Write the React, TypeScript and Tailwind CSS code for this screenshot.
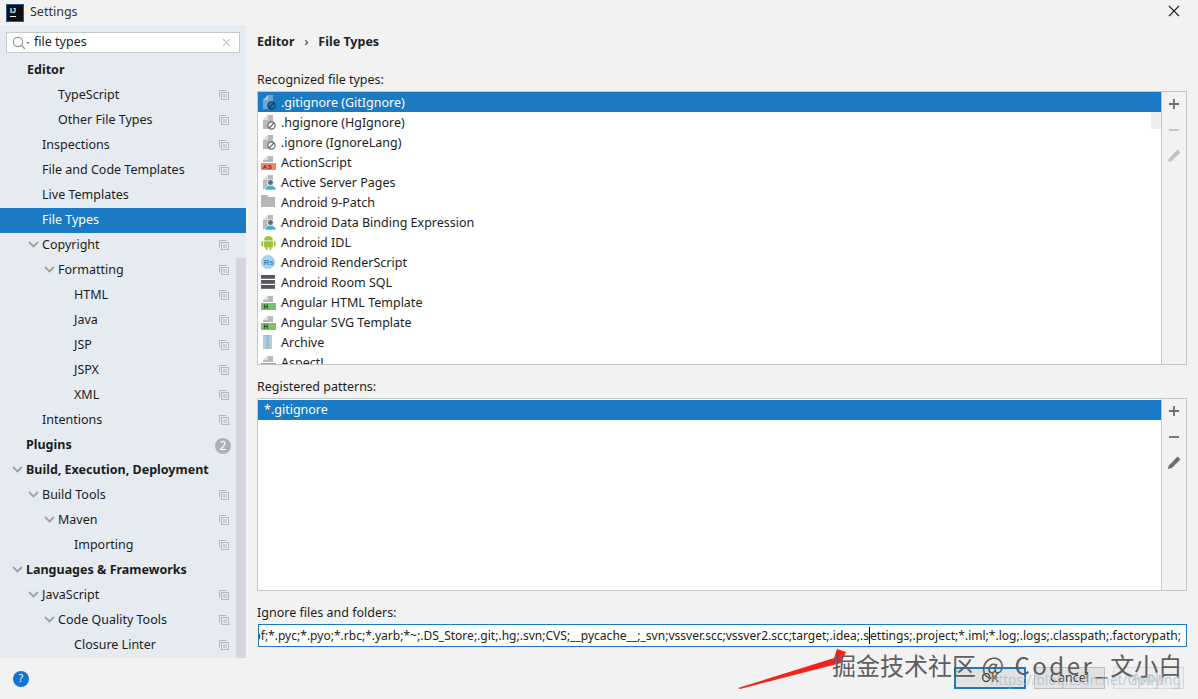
import React from "react";

const FONT = "font-['Noto_Sans','Open_Sans',sans-serif]";

type Row = { t: string; x: number; bold?: boolean; chev?: boolean; copy?: boolean; sel?: boolean; badge?: string };

const rows: Row[] = [
  { t: "Editor", x: 27, bold: true },
  { t: "TypeScript", x: 58, copy: true },
  { t: "Other File Types", x: 58, copy: true },
  { t: "Inspections", x: 42, copy: true },
  { t: "File and Code Templates", x: 42, copy: true },
  { t: "Live Templates", x: 42 },
  { t: "File Types", x: 42, sel: true },
  { t: "Copyright", x: 42, chev: true, copy: true },
  { t: "Formatting", x: 58, chev: true, copy: true },
  { t: "HTML", x: 74, copy: true },
  { t: "Java", x: 74, copy: true },
  { t: "JSP", x: 74, copy: true },
  { t: "JSPX", x: 74, copy: true },
  { t: "XML", x: 74, copy: true },
  { t: "Intentions", x: 42, copy: true },
  { t: "Plugins", x: 26, bold: true, badge: "2" },
  { t: "Build, Execution, Deployment", x: 26, bold: true, chev: true },
  { t: "Build Tools", x: 42, chev: true, copy: true },
  { t: "Maven", x: 58, chev: true, copy: true },
  { t: "Importing", x: 74, copy: true },
  { t: "Languages & Frameworks", x: 26, bold: true, chev: true },
  { t: "JavaScript", x: 42, chev: true, copy: true },
  { t: "Code Quality Tools", x: 58, chev: true, copy: true },
  { t: "Closure Linter", x: 74, copy: true },
];

function CopyIcon() {
  return (
    <svg width="10" height="10" viewBox="0 0 10 10" className="mb-[2px] shrink-0" fill="none" stroke="#b4b8bc" strokeWidth="1">
      <path d="M.5 7.5V.5h7" />
      <rect x="2.5" y="2.5" width="7" height="7" />
      <path d="M4 5h4M4 7h4" />
    </svg>
  );
}

function Chevron() {
  return (
    <svg width="11" height="7" viewBox="0 0 11 7" fill="none" stroke="#9ea2a6" strokeWidth="1.8">
      <path d="M1 1l4.5 4.5L10 1" />
    </svg>
  );
}

function SideRow({ r }: { r: Row }) {
  return (
    <div
      className={`relative flex h-[25px] items-center pr-[17px] text-[12.5px] ${r.sel ? "bg-[#1a7ac4] text-white" : "text-[#1c1c1c]"} ${r.bold ? "font-bold" : ""}`}
      style={{ paddingLeft: r.x }}
    >
      {r.chev && (
        <span className="absolute" style={{ left: r.x - 14, top: 8 }}>
          <Chevron />
        </span>
      )}
      <span className="flex-1 whitespace-nowrap">{r.t}</span>
      {r.copy && <CopyIcon />}
      {r.badge && (
        <span className="-mr-[2px] flex h-[16px] w-[16px] items-center justify-center rounded-full bg-[#adb1b5] text-[12px] font-normal text-white">
          {r.badge}
        </span>
      )}
    </div>
  );
}

function Doc({ sel, full }: { sel?: boolean; full?: boolean }) {
  const c = sel ? "#6fa6d2" : "#b7babd";
  const l = sel ? "#a9c8e2" : "#dcdee0";
  return (
    <>
      <path d={full ? "M7 1h5v14H2V6z" : "M7 2h5v6H2V6z"} fill={c} />
      <path d="M7 1v5H2z" fill={l} />
    </>
  );
}

function FileIcon({ kind, sel }: { kind: string; sel?: boolean }) {
  return (
    <svg width="16" height="16" viewBox="0 0 16 16" className="shrink-0">
      {kind === "ignore" && (
        <>
          <Doc sel={sel} full />
          <circle cx="10.5" cy="11.5" r="3.6" fill={sel ? "#1a7ac4" : "#fff"} stroke={sel ? "#0c3c60" : "#666"} strokeWidth="1.2" />
          <path d="M8 14l5-5" stroke={sel ? "#0c3c60" : "#666"} strokeWidth="1.2" />
        </>
      )}
      {kind === "as" && (
        <>
          <Doc />
          <rect x="0" y="9" width="15" height="7" fill="#f0856a" />
          <text x="1.8" y="15" fontSize="6" fontWeight="700" letterSpacing=".6" fill="#6a2410" fontFamily="'Liberation Sans',sans-serif">AS</text>
        </>
      )}
      {kind === "asp" && (
        <>
          <Doc full />
          <circle cx="9.5" cy="8.5" r="3" fill="#5f6b75" stroke="#fff" />
          <path d="M4 16c0-3 2.5-4.4 5.5-4.4S15 13 15 16z" fill="#3fa9dc" stroke="#fff" strokeWidth=".6" />
        </>
      )}
      {kind === "folder" && <path d="M0 1h6l1.5 2H14v10H0z" fill="#b4b7ba" />}
      {kind === "android" && (
        <g fill="#9bc23c">
          <path d="M3 6.5a4.5 4.5 0 019 0z" />
          <rect x="3" y="7.2" width="9" height="6.4" rx="1" />
          <rect x="0.4" y="7" width="1.9" height="5.4" rx=".9" />
          <rect x="12.7" y="7" width="1.9" height="5.4" rx=".9" />
          <rect x="4.6" y="13" width="1.9" height="3" rx=".9" />
          <rect x="8.5" y="13" width="1.9" height="3" rx=".9" />
        </g>
      )}
      {kind === "rs" && (
        <>
          <circle cx="7" cy="8" r="7" fill="#a5d3ec" />
          <text x="2.6" y="11" fontSize="8" fontWeight="700" fill="#3f86b8" fontFamily="'Liberation Sans',sans-serif">Rs</text>
        </>
      )}
      {kind === "sql" && (
        <g fill="#54585c">
          <rect x="0" y="1" width="14" height="3.8" />
          <rect x="0" y="6" width="14" height="3.8" />
          <rect x="0" y="11" width="14" height="3.8" />
        </g>
      )}
      {kind === "html" && (
        <>
          <Doc />
          <rect x="0" y="9" width="15" height="7" fill="#7cbf73" />
          <text x="2.4" y="15" fontSize="6.5" fontWeight="700" fill="#1c4a18" fontFamily="'Liberation Sans',sans-serif">H</text>
        </>
      )}
      {kind === "archive" && (
        <>
          <rect x="2" y="1" width="9" height="14" fill="#c3c7ca" />
          <path d="M6.5 1v14" stroke="#6fc0e4" strokeWidth="3" strokeDasharray="1.4 1" />
        </>
      )}
      {kind === "aspectj" && (
        <>
          <Doc />
          <rect x="0" y="9" width="15" height="7" fill="#e8846a" />
        </>
      )}
    </svg>
  );
}

const types: [string, string][] = [
  [".gitignore (GitIgnore)", "ignore"],
  [".hgignore (HgIgnore)", "ignore"],
  [".ignore (IgnoreLang)", "ignore"],
  ["ActionScript", "as"],
  ["Active Server Pages", "asp"],
  ["Android 9-Patch", "folder"],
  ["Android Data Binding Expression", "asp"],
  ["Android IDL", "android"],
  ["Android RenderScript", "rs"],
  ["Android Room SQL", "sql"],
  ["Angular HTML Template", "html"],
  ["Angular SVG Template", "html"],
  ["Archive", "archive"],
  ["AspectJ", "aspectj"],
];

function Tool({ faded }: { faded?: boolean }) {
  const c = faded ? "#c2c2c2" : "#6e6e6e";
  return (
    <div className="flex w-[25px] shrink-0 flex-col items-center border-l border-[#c4c4c4] bg-[#f2f2f2] pt-[5px]">
      <svg width="14" height="14" viewBox="0 0 14 14" className="mb-[12px]"><path d="M2 7h10M7 2v10" stroke="#6e6e6e" strokeWidth="1.8" /></svg>
      <svg width="14" height="14" viewBox="0 0 14 14" className="mb-[11px]"><path d="M2 7h10" stroke={c} strokeWidth="1.8" /></svg>
      <svg width="15" height="15" viewBox="0 0 15 15"><path d="M1 14l.8-3.6L10.6 1.6l2.8 2.8-8.8 8.8z" fill={c} /></svg>
    </div>
  );
}

export default function App() {
  return (
    <div className={`relative flex h-[699px] w-[1198px] flex-col overflow-hidden bg-[#f2f2f2] ${FONT} text-[12.5px] text-[#1c1c1c]`}>
      <div className="flex h-[25px] shrink-0 items-center pl-[7px]">
        <div className="flex h-4 w-4 flex-col bg-[#0c0f14] pl-[3px] pt-[1px] font-['Liberation_Sans',sans-serif] text-[7px] font-bold leading-[9px] text-white outline outline-1 outline-[#2a5a86]">
          IJ
          <span className="mt-[1px] h-[1px] w-[6px] bg-white" />
        </div>
        <span className="ml-[7px] text-[12.5px] text-[#333]">Settings</span>
        <svg width="12" height="12" viewBox="0 0 12 12" className="ml-auto mr-[18px] mt-[-4px]"><path d="M1 1l10 10M11 1L1 11" stroke="#222" strokeWidth="1.1" /></svg>
      </div>

      <div className="flex h-[633px] shrink-0">
        <aside className="relative flex w-[246px] shrink-0 flex-col bg-[#e6ebf1]">
          <div className="mx-[6px] mt-[7px] flex h-[21px] w-[234px] items-center border border-[#c6c9cc] bg-white pl-[5px] pr-[8px]">
            <svg width="20" height="14" viewBox="0 0 20 14" fill="none">
              <circle cx="6" cy="6" r="4.6" stroke="#8d9194" strokeWidth="1.1" />
              <path d="M9.5 9.5l3.5 3.5" stroke="#8d9194" strokeWidth="1.2" />
              <path d="M14 6h4l-2 2.2z" fill="#8d9194" />
            </svg>
            <span className="ml-[2px] flex-1 text-[12.5px] text-[#222]">file types</span>
            <svg width="9" height="9" viewBox="0 0 9 9"><path d="M1 1l7 7M8 1L1 8" stroke="#c4c6c8" strokeWidth="1.1" /></svg>
          </div>
          <div className="mt-[5px] flex flex-col">
            {rows.map((r) => (
              <SideRow key={r.t} r={r} />
            ))}
          </div>
          <div className="absolute bottom-0 right-0 top-[233px] w-[10px] bg-[#d3d7db]" />
        </aside>

        <main className="flex min-w-0 flex-1 flex-col pl-[11px] pr-[11px]">
          <div className="mt-[8px] flex h-[18px] items-center text-[12.5px] font-bold text-[#222]">
            Editor
            <span className="mx-[10px] font-normal">›</span>
            File Types
          </div>
          <div className="mt-[20px] h-[18px] leading-[18px]">Recognized file types:</div>
          <div className="mt-[2px] flex h-[274px] border border-[#c4c4c4] bg-white">
            <div className="relative min-w-0 flex-1 overflow-hidden">
              {types.map(([t, k], i) => (
                <div key={t} className={`flex h-[20px] items-center gap-[4px] pl-[3px] ${i === 0 ? "bg-[#1a7ac4] text-white" : ""}`}>
                  <FileIcon kind={k} sel={i === 0} />
                  <span className="whitespace-nowrap pt-[2px]">{t}</span>
                </div>
              ))}
              <div className="absolute right-0 top-[20px] h-[17px] w-[10px] bg-[#eeeeee]" />
            </div>
            <Tool faded />
          </div>
          <div className="mt-[13px] h-[18px] leading-[18px]">Registered patterns:</div>
          <div className="mt-[2px] flex h-[193px] border border-[#c4c4c4] bg-white">
            <div className="min-w-0 flex-1 pt-[1px]">
              <div className="flex h-[20px] items-center bg-[#1a7ac4] pl-[6px] text-white">*.gitignore</div>
            </div>
            <Tool />
          </div>
          <div className="mt-[13px] h-[18px] leading-[18px]">Ignore files and folders:</div>
          <div className="ml-[1px] mt-[2px] flex h-[23px] items-center justify-end overflow-hidden border border-[#1a7ac4] bg-white pr-[5px] pt-[1px]">
            <span className="whitespace-nowrap text-[12.04px] text-[#222]">
              *.hprof;*.pyc;*.pyo;*.rbc;*.yarb;*~;.DS_Store;.git;.hg;.svn;CVS;__pycache__;_svn;vssver.scc;vssver2.scc;target;.idea;.s
              <span className="border-l border-black" />
              ettings;.project;*.iml;*.log;.logs;.classpath;.factorypath;
            </span>
          </div>
        </main>
      </div>

      <footer className="flex flex-1 items-center pl-[13px] pr-[14px]">
        <div className="flex h-4 w-4 items-center justify-center rounded-full bg-[#1473cc] text-[11px] text-white">?</div>
        <div className="ml-auto flex gap-[8px] pb-[2px] pt-[1px] text-[12.5px]">
          <div className="flex h-[22px] w-[72px] items-center justify-center border-2 border-[#1a7ac4] bg-[#e2e2e2] text-[#333]">OK</div>
          <div className="flex h-[22px] w-[71px] items-center justify-center border border-[#bdbdbd] bg-[#e2e2e2] text-[#333]">Cancel</div>
          <div className="flex h-[22px] w-[71px] items-center justify-center border border-[#d8d8d8] bg-[#eeeeee] text-[#c4c4c4]">Apply</div>
        </div>
      </footer>

      <svg width="110" height="46" viewBox="0 0 110 46" className="absolute left-[738px] top-[646px]">
        <path d="M0 42L96 12 99 3 108 6 103 17 2 43z" fill="#f0241c" />
      </svg>
      <div className="absolute left-[832px] top-[649px] whitespace-nowrap font-['Noto_Sans_CJK_SC','Noto_Sans',sans-serif] text-[24px] leading-[32px] text-[#5e5e5e]">
        掘金技术社区 <span className="tracking-[2.5px]">@ Coder_</span>文小白
      </div>
      <div className="absolute left-[990px] top-[671px] whitespace-nowrap text-[13.5px] leading-[18px] text-[#a9bbcc]/70">https://blog.csdn.net/Gpflying</div>
    </div>
  );
}
